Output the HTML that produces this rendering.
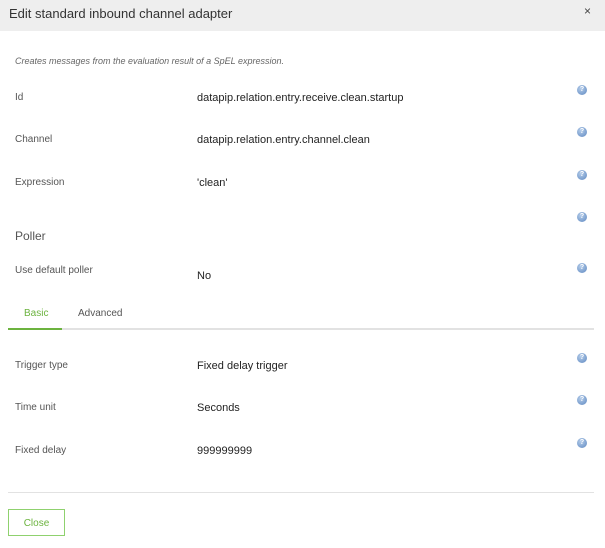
<!DOCTYPE html><html><head><style>
body{margin:0;width:605px;height:548px;background:#fff;font-family:"Liberation Sans",sans-serif;position:relative;overflow:hidden}
.a{position:absolute;white-space:nowrap}
.hd{position:absolute;left:0;top:0;width:605px;height:31px;background:#eeeeee}
.l{font-size:10px;color:#555;left:15px}
.v{font-size:11px;color:#222;left:197px}
.q{position:absolute;left:577px;width:10px;height:10px;border-radius:50%;background:radial-gradient(circle at 40% 35%,#b5cdea,#5d87c0);display:flex;align-items:center;justify-content:center;font-size:7px;color:#fff;font-weight:bold;line-height:10px}
</style></head><body>
<div class="hd"></div>
<div class="a" style="left:9px;top:6px;font-size:13px;color:#333">Edit standard inbound channel adapter</div>
<div class="a" style="left:584px;top:4px;font-size:12px;color:#444">×</div>
<div class="a" style="left:15px;top:56px;font-size:9px;color:#666;font-style:italic">Creates messages from the evaluation result of a SpEL expression.</div>
<div class="a l" style="top:92px">Id</div><div class="a v" style="top:92px">datapip.relation.entry.receive.clean.startup</div><div class="q" style="top:85px">?</div>
<div class="a l" style="top:134px">Channel</div><div class="a v" style="top:134px">datapip.relation.entry.channel.clean</div><div class="q" style="top:127px">?</div>
<div class="a l" style="top:177px">Expression</div><div class="a v" style="top:177px">'clean'</div><div class="q" style="top:170px">?</div>
<div class="q" style="top:212px">?</div>
<div class="a" style="left:15px;top:229px;font-size:12px;color:#555">Poller</div>
<div class="a l" style="top:265px">Use default poller</div><div class="a v" style="top:270px">No</div><div class="q" style="top:263px">?</div>
<div class="a" style="left:24px;top:308px;font-size:10px;color:#6cb33f">Basic</div>
<div class="a" style="left:78px;top:308px;font-size:10px;color:#555">Advanced</div>
<div class="a" style="left:8px;top:328px;width:586px;height:2px;background:#e2e2e2"></div>
<div class="a" style="left:8px;top:328px;width:54px;height:2px;background:#6cb33f"></div>
<div class="a l" style="top:360px">Trigger type</div><div class="a v" style="top:360px">Fixed delay trigger</div><div class="q" style="top:353px">?</div>
<div class="a l" style="top:402px">Time unit</div><div class="a v" style="top:402px">Seconds</div><div class="q" style="top:395px">?</div>
<div class="a l" style="top:445px">Fixed delay</div><div class="a v" style="top:445px">999999999</div><div class="q" style="top:438px">?</div>
<div class="a" style="left:8px;top:492px;width:586px;height:1px;background:#e2e2e2"></div>
<div class="a" style="left:8px;top:509px;width:55px;height:25px;border:1px solid #8fd16e;font-size:10px;color:#6cb33f;text-align:center;line-height:27px">Close</div>
</body></html>
